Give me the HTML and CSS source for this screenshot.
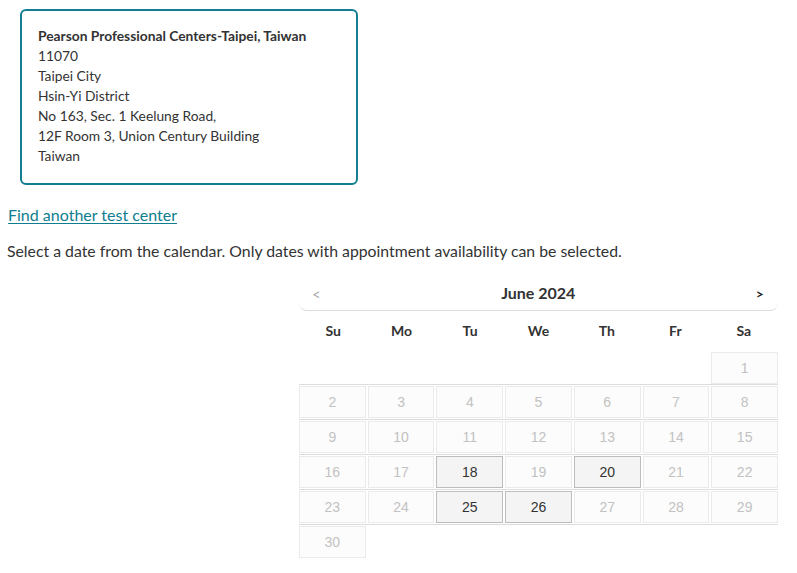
FILE: index.html
```html
<!DOCTYPE html>
<html>
<head>
<meta charset="utf-8">
<link rel="stylesheet" href="styles.css">
</head>
<body>
<div class="page">
  <div class="center-card">
    <div class="center-name">Pearson Professional Centers-Taipei, Taiwan</div>
    <div>11070</div>
    <div>Taipei City</div>
    <div>Hsin-Yi District</div>
    <div>No 163, Sec. 1 Keelung Road,</div>
    <div>12F Room 3, Union Century Building</div>
    <div>Taiwan</div>
  </div>
  <a class="find-link" href="#">Find another test center</a>
  <p class="instructions">Select a date from the calendar. Only dates with appointment availability can be selected.</p>
  <div class="calendar">
    <div class="cal-nav">
      <span class="nav-prev">&lt;</span>
      <span class="cal-title">June 2024</span>
      <span class="nav-next">&gt;</span>
    </div>
    <div class="cal-weekdays">
      <span>Su</span><span>Mo</span><span>Tu</span><span>We</span><span>Th</span><span>Fr</span><span>Sa</span>
    </div>
    <div class="cal-row first">
      <span class="empty"></span><span class="empty"></span><span class="empty"></span><span class="empty"></span><span class="empty"></span><span class="empty"></span><span class="day">1</span>
    </div>
    <div class="cal-row">
      <span class="day">2</span><span class="day">3</span><span class="day">4</span><span class="day">5</span><span class="day">6</span><span class="day">7</span><span class="day">8</span>
    </div>
    <div class="cal-row">
      <span class="day">9</span><span class="day">10</span><span class="day">11</span><span class="day">12</span><span class="day">13</span><span class="day">14</span><span class="day">15</span>
    </div>
    <div class="cal-row">
      <span class="day">16</span><span class="day">17</span><span class="day available">18</span><span class="day">19</span><span class="day available">20</span><span class="day">21</span><span class="day">22</span>
    </div>
    <div class="cal-row">
      <span class="day">23</span><span class="day">24</span><span class="day available">25</span><span class="day available">26</span><span class="day">27</span><span class="day">28</span><span class="day">29</span>
    </div>
    <div class="cal-row">
      <span class="day">30</span><span class="empty"></span><span class="empty"></span><span class="empty"></span><span class="empty"></span><span class="empty"></span><span class="empty"></span>
    </div>
  </div>
</div>
</body>
</html>
```

FILE: styles.css
```css
html, body {
  margin: 0;
  padding: 0;
  background: #ffffff;
}

body {
  font-family: Lato, "Open Sans", sans-serif;
  color: #333333;
}

.page {
  padding: 9px 0 0 7px;
}

.center-card {
  margin-left: 13px;
  width: 302px;
  border: 2.5px solid #137d91;
  border-radius: 6px;
  padding: 15px 16px 17px 16px;
  font-size: 13.8px;
  line-height: 20px;
}

.center-name {
  font-weight: bold;
}

.find-link {
  display: inline-block;
  margin-top: 20px;
  margin-left: 1px;
  font-size: 16px;
  line-height: 20px;
  color: #0e7d8f;
  text-decoration: underline;
  text-underline-offset: 2px;
}

.instructions {
  margin: 16px 0 0 0;
  font-size: 15.8px;
  line-height: 20px;
}

.calendar {
  margin-left: 292px;
  margin-top: 17px;
  width: 479px;
}

.cal-nav {
  box-sizing: border-box;
  display: flex;
  align-items: center;
  justify-content: space-between;
  height: 33px;
  border-bottom: 1px solid #dcdcdc;
  border-radius: 0 0 8px 8px;
  padding: 0 14px 4px 13px;
  font-size: 16px;
}

.nav-prev {
  color: #aaaaaa;
  font-size: 15px;
  margin-top: 3px;
}

.nav-next {
  color: #222222;
  font-weight: bold;
  font-size: 14px;
  margin-top: 2px;
}

.cal-title {
  font-weight: bold;
  color: #333333;
}

.cal-weekdays {
  box-sizing: border-box;
  display: grid;
  grid-template-columns: repeat(7, 1fr);
  height: 40px;
  padding-bottom: 2px;
  align-items: center;
  font-size: 14px;
  font-weight: bold;
  text-align: center;
}

.cal-row {
  display: grid;
  grid-template-columns: repeat(7, 1fr);
  column-gap: 2px;
  padding: 1px 0;
  border-top: 1px solid #dddddd;
}

.cal-row.first {
  border-top: none;
  padding-bottom: 0;
}

.day, .empty {
  height: 32px;
  box-sizing: border-box;
}

.day {
  display: flex;
  align-items: center;
  justify-content: center;
  border: 1px solid #ebebeb;
  background: #fcfcfc;
  color: #c2c2c2;
  font-family: "Liberation Sans", Arial, sans-serif;
  font-size: 14px;
}

.day.available {
  border-color: #bdbdbd;
  background: #f4f4f4;
  color: #333333;
}
```
